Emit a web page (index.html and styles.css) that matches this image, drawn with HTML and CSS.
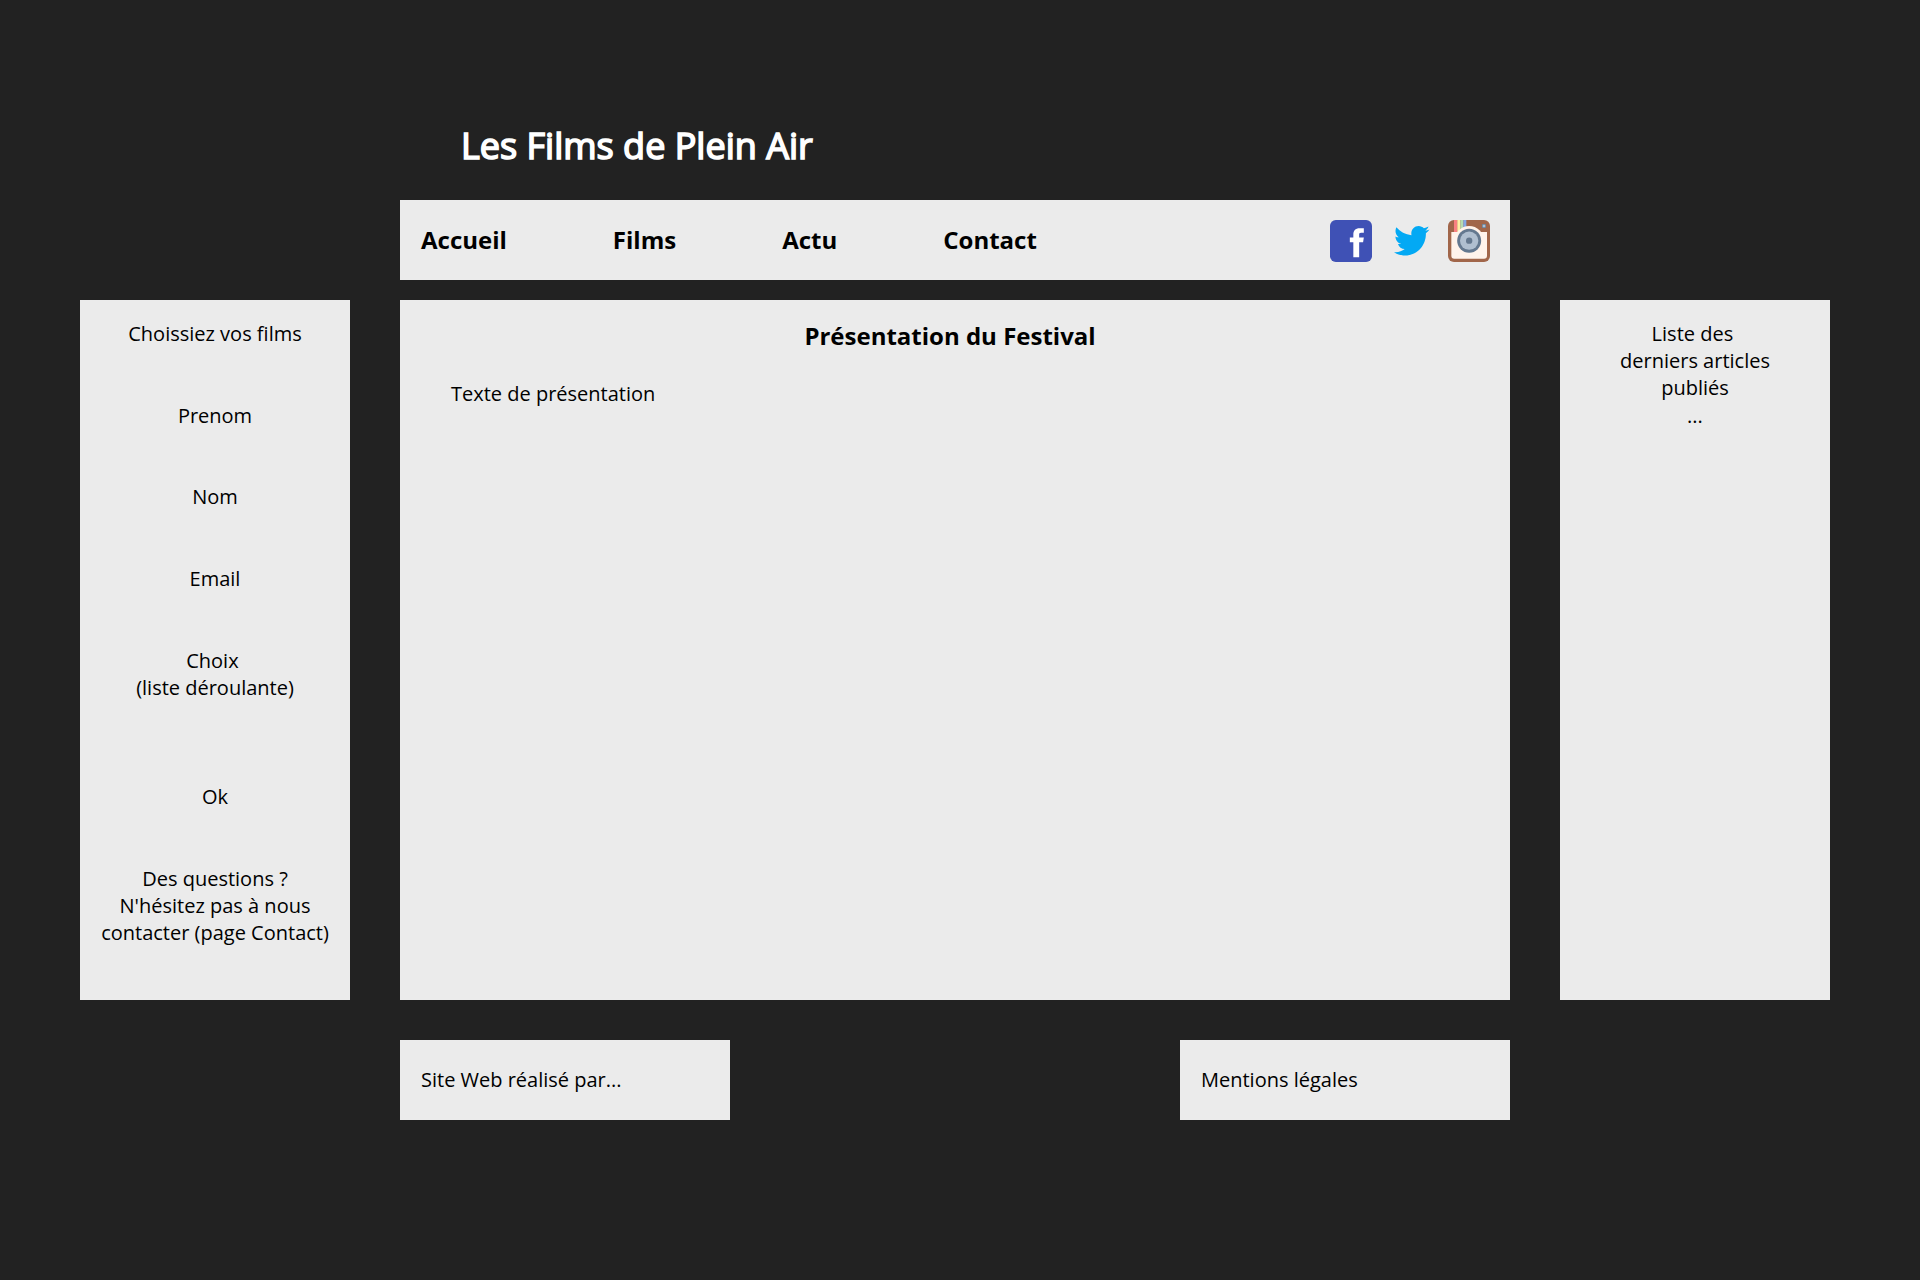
FILE: index.html
```html
<!DOCTYPE html>
<html lang="fr">
<head>
<meta charset="utf-8">
<title>Les Films de Plein Air</title>
<link rel="stylesheet" href="styles.css">
</head>
<body>
<div class="page">
  <h1 class="site-title">Les Films de Plein Air</h1>
  <header class="topbar panel">
    <nav class="menu">
      <a>Accueil</a>
      <a>Films</a>
      <a>Actu</a>
      <a>Contact</a>
    </nav>
    <div class="social">
      <svg class="icon-facebook" viewBox="6 6 36 36"><rect x="6" y="6" width="36" height="36" rx="5" fill="#3f51b5"/><path fill="#fff" d="M34.368 25H31v13h-5V25h-3v-4h3v-2.41c.002-3.508 1.459-5.59 5.592-5.59H35v4h-2.287C31.104 17 31 17.6 31 18.723V21h4l-.632 4z"/></svg>
      <svg class="icon-twitter" viewBox="6 9 36 29" preserveAspectRatio="none"><path fill="#03a9f4" d="M42 12.429c-1.323.586-2.746.977-4.247 1.162 1.526-.906 2.7-2.351 3.251-4.058-1.428.837-3.01 1.452-4.693 1.776C34.967 9.884 33.05 9 30.926 9c-4.08 0-7.387 3.278-7.387 7.32 0 .572.067 1.129.193 1.67-6.138-.308-11.582-3.226-15.224-7.654-.64 1.082-1 2.349-1 3.686 0 2.541 1.301 4.778 3.285 6.096-1.211-.037-2.351-.374-3.349-.914v.086c0 3.551 2.547 6.508 5.923 7.181-.617.169-1.269.263-1.941.263-.477 0-.942-.054-1.392-.135.94 2.902 3.667 5.023 6.898 5.086-2.528 1.96-5.712 3.134-9.174 3.134-.598 0-1.183-.034-1.761-.104C9.268 36.786 13.152 38 17.321 38c13.585 0 21.017-11.156 21.017-20.834 0-.317-.01-.633-.025-.945C39.763 15.197 41.013 13.905 42 12.429"/></svg>
      <svg class="icon-instagram" viewBox="0 0 126 126">
        <rect width="126" height="126" rx="18" fill="#a1664a"/>
        <path fill="#f98080" d="M18 0h10v36H18z"/><path fill="#fff0a5" d="M28 0h9v36h-9z"/><path fill="#b5dcb2" d="M37 0h9v36h-9z"/><path fill="#84a9e6" d="M46 0h9v36h-9z"/>
        <path fill="#fff3eb" d="M10 36h107v71a9 9 0 0 1-9 9H19a9 9 0 0 1-9-9z"/>
        <circle cx="63.500" cy="62" r="44" fill="#fff3eb"/>
        <circle cx="63.500" cy="62" r="36" fill="#64788f"/>
        <circle cx="63.500" cy="62" r="27.500" fill="#b0bfd0"/>
        <circle cx="63.500" cy="62" r="9.500" fill="#64788f"/>
        <rect x="102" y="12" width="12" height="12" fill="#64788f"/><rect x="104" y="14" width="8" height="8" fill="#b0bfd0"/>
      </svg>
    </div>
  </header>
  <aside class="booking panel">
    <p>Choissiez vos films</p>
    <p>Prenom</p>
    <p>Nom</p>
    <p>Email</p>
    <p class="choice">Choix&nbsp;<br>(liste déroulante)</p>
    <p>Ok</p>
    <p>Des questions ?<br>N'hésitez pas à nous<br>contacter (page Contact)</p>
  </aside>
  <main class="content panel">
    <h2>Présentation du Festival</h2>
    <p>Texte de présentation</p>
  </main>
  <aside class="news panel">
    <p>Liste des&nbsp;<br>derniers articles<br>publiés<br>...</p>
  </aside>
  <footer class="footer">
    <div class="panel">Site Web réalisé par...</div>
    <div class="panel">Mentions légales</div>
  </footer>
</div>
</body>
</html>
```
FILE: styles.css
```css
* { box-sizing: border-box; margin: 0; }
body {
  background: #222;
  color: #000;
  font: 20px/27.24px "Open Sans", sans-serif;
}
.page {
  display: grid;
  grid-template-columns: 270px 1110px 270px;
  grid-template-rows: 80px 80px 700px 80px;
  column-gap: 50px;
  height: 1280px;
  padding: 120px 90px 0 80px;
}
.panel { background: #ebebeb; }
.site-title {
  grid-column: 2;
  grid-row: 1;
  padding: 1px 0 0 61px;
  color: #fff;
  font-size: 36px;
  font-weight: 400;
  line-height: 49px;
  -webkit-text-stroke: 1.6px #fff;
}
.topbar {
  grid-column: 2;
  grid-row: 2;
  display: flex;
  justify-content: space-between;
  align-items: center;
  padding: 0 20px 0 21px;
}
.menu {
  display: flex;
  gap: 106px;
  padding-bottom: 1px;
  font-size: 24px;
  font-weight: 700;
  line-height: 33px;
}
.social {
  display: flex;
  align-items: center;
  padding-top: 2px;
}
.social svg { display: block; }
.icon-facebook { width: 42px; height: 42px; }
.icon-twitter { width: 35.5px; height: 29.5px; margin: 0 18.5px 0 22px; }
.icon-instagram { width: 42px; height: 42px; }
.booking, .content, .news { grid-row: 3; margin-top: 20px; height: 700px; }
.booking, .news { padding-top: 20px; text-align: center; }
.booking { grid-column: 1; }
.booking p { margin-bottom: 54.48px; }
.booking .choice { margin-bottom: 81.72px; }
.content { grid-column: 2; }
.content h2 {
  padding: 20px 10px 0 0;
  font-size: 24px;
  line-height: 32.68px;
  text-align: center;
}
.content p { padding: 27.32px 51px 0; }
.news { grid-column: 3; }
.footer {
  grid-column: 2;
  grid-row: 4;
  display: flex;
  justify-content: space-between;
  margin-top: 60px;
  height: 80px;
}
.footer .panel {
  display: flex;
  align-items: center;
  width: 330px;
  padding: 0 21px;
}
```
